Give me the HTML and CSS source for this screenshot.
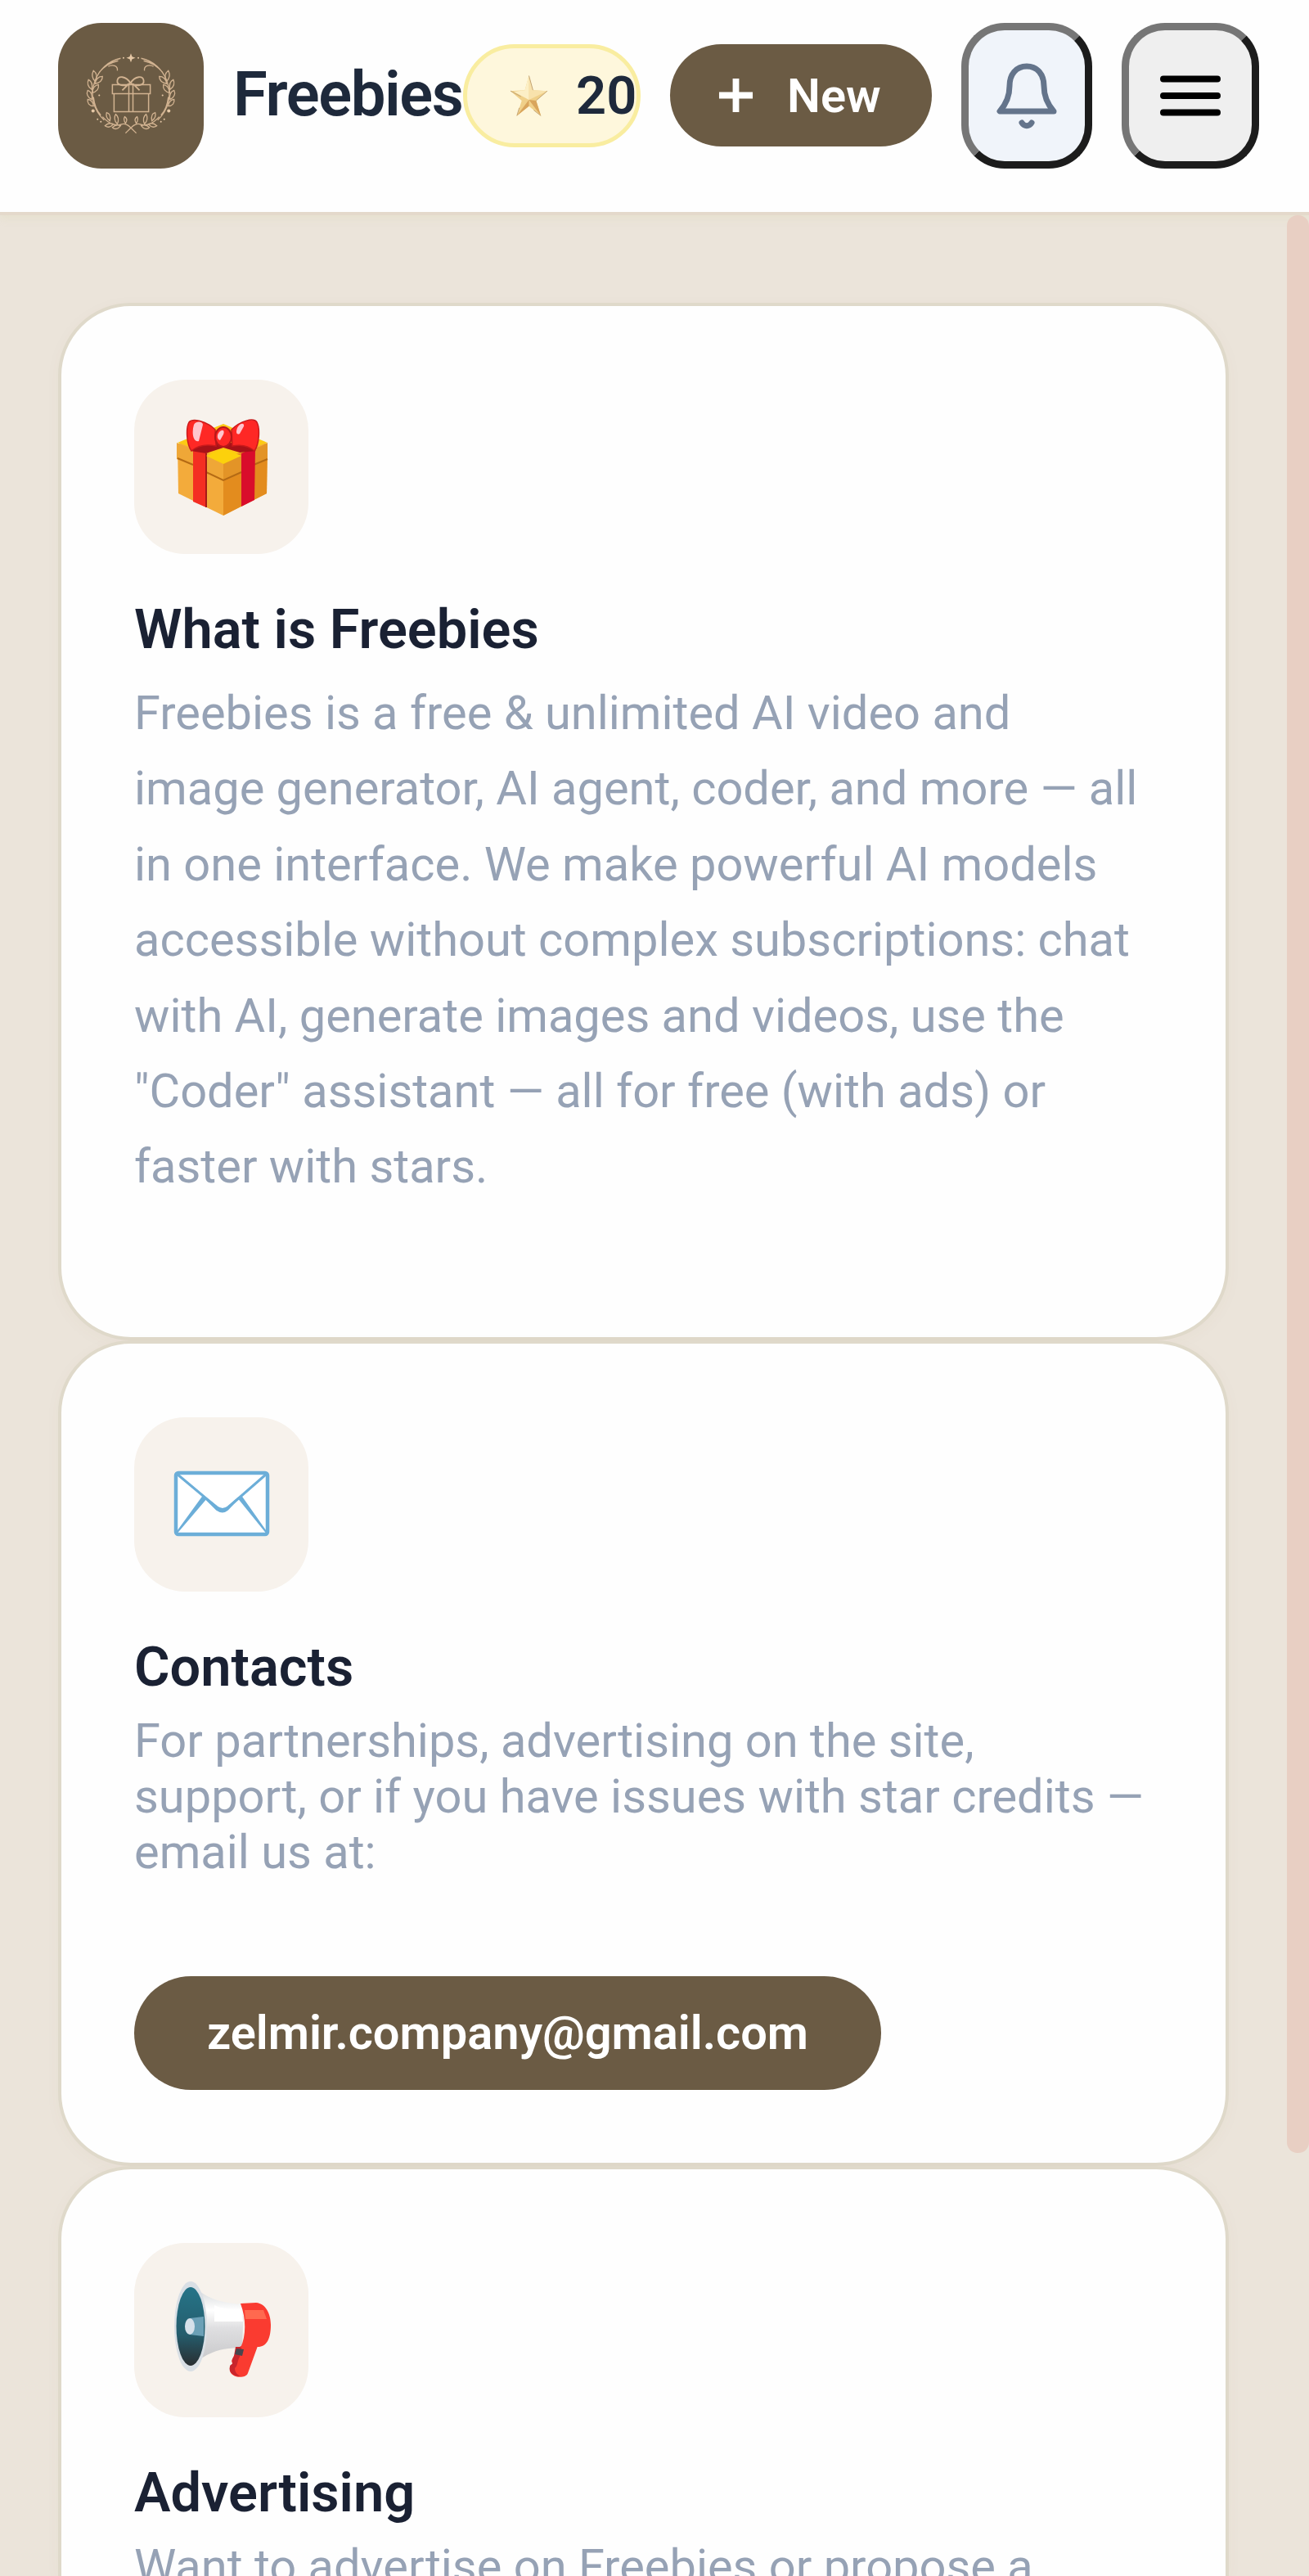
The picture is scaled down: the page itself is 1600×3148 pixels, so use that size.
FILE: index.html
```html
<!DOCTYPE html>
<html lang="en">
<head>
  <meta charset="UTF-8">
  <title>Freebies</title>
  <link rel="stylesheet" href="styles.css">
</head>
<body>
  <header class="topbar">
    <div class="logo">
      <svg viewBox="0 0 177 177">
        <defs>
          <!-- left half of the wreath, mirrored for the right one -->
          <g id="sprig">
            <path d="M76 43c-15 3-26 14-31 27-7 18-2 36 11 48M73 46c-10 2-18 8-23 14M61 53c5-3 12-1 11 5M43 90c1 9 4 17 9 22"/>
            <path d="M45 71c-4-4-4-9-2-13 4 3 5 8 2 13zM45 74c1-6 4-9 9-9 0 5-4 8-9 9zM41 81c-5-3-6-8-4-12 4 2 5 7 4 12zM41 85c1-6 3-9 8-10 1 5-2 9-8 10zM41 93c-5-2-7-7-5-11 4 1 6 6 5 11zM43 101c-5 0-8-4-7-8 4 0 7 4 7 8z"/>
            <path d="M54 114c8 9 17 12 24 9 5-2 10 4 17 11M63 119c-4-3-5-7-4-10 4 1 5 5 4 10zM72 123c-4-4-4-9-2-12 4 3 4 7 2 12zM67 123c-3 4-7 4-10 2 3-3 6-4 10-2zM76 125c-3 4-7 5-10 2 3-3 6-4 10-2zM82 122c-2-3-3-5-1-8 3 2 3 5 1 8z"/>
          </g>
        </defs>
        <g fill="none" stroke="#d2b391" stroke-width="1.3">
          <use href="#sprig"/>
          <use href="#sprig" transform="translate(177 0) scale(-1 1)"/>
          <path d="M66 75h46v11H66zM68 86h42v22H68zM86 75v33M91 75v33" stroke-width="1.5"/>
          <path d="M88 73c-6-9-15-9-16-3s9 8 16 3c6-9 15-9 16-3s-9 8-16 3M86 74l-8 8M91 74l8 8" stroke-width="1.8"/>
        </g>
        <g fill="#e6c8a6">
          <path d="M88.500 37l1.500 4 4 1.500-4 1.500-1.500 4-1.500-4-4-1.500 4-1.500z"/>
          <circle cx="79.500" cy="42.500" r="1"/><circle cx="97.500" cy="42.500" r="1"/>
          <circle cx="42.500" cy="107" r="2"/><circle cx="134.500" cy="107" r="2"/>
          <circle cx="50" cy="88" r="1"/><circle cx="127" cy="88" r="1"/>
          <circle cx="48" cy="117" r="1"/><circle cx="129" cy="117" r="1"/>
          <circle cx="52" cy="120" r="1"/><circle cx="125" cy="120" r="1"/>
        </g>
      </svg>
    </div>
    <div class="brand">Freebies</div>
    <div class="stars">
      <svg class="star" viewBox="0 0 48 52">
        <path d="M24 1l5 18 18 1-14 12 6 19-15-12-15 12 6-19L1 20l18-1z" fill="#f0d089"/>
        <path d="M24 31l9 1 6 19zM24 31v8L9 51z" fill="#d9a55c"/>
        <path d="M24 1v30l5-12zM47 20L24 31l5-12z" fill="#f8e2ac"/>
        <path d="M24 1l-5 18 5 12zM5 21l19 10-5-12z" fill="#fcefc6"/>
        <path d="M24 1l5 18M1 20l13 7M47 20l-14 12M39 51l-9-7M9 51l3-10" stroke="#c2a374" stroke-width="1" fill="none"/>
      </svg>
      <span>20</span>
    </div>
    <button class="new-btn">
      <svg viewBox="0 0 44 44"><path d="M22 1v42M1 22h42" stroke="#fff" stroke-width="8"/></svg>
      <span>New</span>
    </button>
    <button class="icon-btn bell">
      <svg viewBox="0 0 80 90" fill="none" stroke="#64748b" stroke-width="7" stroke-linecap="round" stroke-linejoin="round">
        <path d="M7 64h66c-8-9-12-19-12-31 0-14-8-24-21-24s-21 10-21 24c0 12-4 22-12 31z"/>
        <path d="M34 78c3 5 9 5 12 0"/>
      </svg>
    </button>
    <button class="icon-btn menu">
      <svg viewBox="0 0 74 50" stroke="#000" stroke-width="8" stroke-linecap="round"><path d="M4 4.500h66M4 25h66M4 45.500h66"/></svg>
    </button>
  </header>

  <main>
    <section class="card about">
      <div class="card-icon">
        <svg viewBox="0 0 120 120">
          <path d="M6 32L62 12l54 20-1 60-53 27L7 92z" fill="#f3ab3b"/>
          <path d="M62 49l54-17-1 60-53 27z" fill="#e38c1e"/>
          <path d="M6 30L62 7l54 23-54 19z" fill="#fcc915"/>
          <path d="M5 30l20 9v18L5 50zM41 45l21 9v23l-21-9z" fill="#efa737"/>
          <path d="M62 54l22-9v22l-22 10zM99 39l17-9v20l-17 7z" fill="#e39427"/>
          <path d="M6 49l19 8M41 66l21 10 22-10M99 57l17-7" fill="none" stroke="#b46a14" stroke-width="2"/>
          <path d="M25 35l16 8v66l-16-7z" fill="#f42e22"/>
          <path d="M41 43v66" stroke="#a51a18" stroke-width="2"/>
          <path d="M84 43l17-7-1 64-16 8z" fill="#d90d2b"/>
          <path d="M41 46l21-9 22 9-22 10z" fill="#fcd10c"/>
          <path d="M22 40c18-14 62-14 80 0l-20 2-20-6-21 7z" fill="#a81218"/>
          <path d="M52 14C41 3 24 0 20 5c-4 7-3 27 3 35 8-7 20-8 30-6zM72 14C83 3 99-1 103 5c4 7 3 27-3 35-8-7-17-8-27-6z" fill="#fe2825" stroke="#c91a1b" stroke-width="1.500"/>
          <ellipse cx="62" cy="23" rx="10" ry="12" fill="#fe2825" stroke="#b7181a" stroke-width="2"/>
          <path d="M26 8c3-5 11-4 11 0l-5 20c-7 2-9-10-6-20zM79 12c3-6 9-7 8-2l-5 9c-4 2-5-2-3-7zM57 17c4-4 7-2 5 3l-4 7c-4-1-4-7-1-10z" fill="#ffc5cd"/>
        </svg>
      </div>
      <h2>What is Freebies</h2>
      <p>Freebies is a free &amp; unlimited AI video and<br>image generator, AI agent, coder, and more — all<br>in one interface. We make powerful AI models<br>accessible without complex subscriptions: chat<br>with AI, generate images and videos, use the<br>"Coder" assistant — all for free (with ads) or<br>faster with stars.</p>
    </section>

    <section class="card contacts">
      <div class="card-icon">
        <svg viewBox="0 0 120 120">
          <rect x="4" y="21" width="112" height="75" rx="3" fill="#fff" stroke="#6caed8" stroke-width="4.500"/>
          <path d="M5 22l49 41q7 5 14 0l47-41" fill="none" stroke="#6caed8" stroke-width="3"/>
          <path d="M38 50l17 13q6 4 12 0l14-12-14 15q-6 5-13 0z" fill="#6caed8" stroke="#6caed8" stroke-width="2"/>
          <path d="M37 50L5 94l35-41zM81 52l34 42-31-44z" fill="#6caed8" stroke="#6caed8" stroke-width="2"/>
        </svg>
      </div>
      <h2>Contacts</h2>
      <p>For partnerships, advertising on the site,<br>support, or if you have issues with star credits —<br>email us at:</p>
      <a class="email" href="mailto:zelmir.company@gmail.com">zelmir.company@gmail.com</a>
    </section>

    <section class="card ads">
      <div class="card-icon">
        <svg viewBox="1 1 120 120">
          <defs>
            <linearGradient id="cone" x2="0" y2="1"><stop offset="0" stop-color="#257488"/><stop offset=".6" stop-color="#255d6d"/><stop offset="1" stop-color="#292e31"/></linearGradient>
            <linearGradient id="horn" x2="0" y2="1"><stop offset="0" stop-color="#d5d8da"/><stop offset=".3" stop-color="#fff"/><stop offset=".55" stop-color="#dfdfe1"/><stop offset="1" stop-color="#c9c9cb"/></linearGradient>
          </defs>
          <path d="M30 10c17 14 35 18 58 19l-2 53c-20 0-36 3-53 15z" fill="url(#horn)"/>
          <path d="M52 30c10 5 22 5 33 5l2 15H52z" fill="#fff"/>
          <ellipse cx="23" cy="56" rx="20" ry="55" fill="#d9dfe5"/>
          <ellipse cx="23" cy="56" rx="17.500" ry="48" fill="url(#cone)"/>
          <path d="M22 46l17-2v24l-17-2z" fill="#6ba0b6"/>
          <ellipse cx="22" cy="56" rx="6" ry="10" fill="#d7e1ea"/>
          <path d="M84 80h21l-12 33c-3 8-23 6-22-5 0-5 3-4 3-7-2-4 1-6 2-9z" fill="#fa3b30"/>
          <path d="M78 81h8c-4 7-1 10-4 14-2 5-2 10-5 12 0 5 3 8 7 10-10 0-15-6-13-12 0-3 4-2 3-5-1-4 1-5 2-8z" fill="#c9252c"/>
          <path d="M84 28l19-1c12 1 18 14 18 27 0 17-5 27-16 27l-21 1c7-15 7-35 0-54z" fill="#fa3b30"/>
          <path d="M89 36h23l4 11H90z" fill="#ff694f"/>
          <path d="M79 83l9 1-2 8-9-2z" fill="#47464e"/>
        </svg>
      </div>
      <h2>Advertising</h2>
      <p>Want to advertise on Freebies or propose a</p>
    </section>
  </main>
  <div class="scroll-thumb"></div>
</body>
</html>
```
FILE: styles.css
```css
* {
  box-sizing: border-box;
}

body {
  margin: 0;
  height: 3148px;
  overflow: hidden;
  background: #ebe4da;
  font-family: Roboto, "Liberation Sans", sans-serif;
  color: #1a2133;
}

svg {
  display: block;
}

.topbar {
  display: flex;
  align-items: center;
  height: 263px;
  padding: 0 61px 26px 71px;
  background: #fefefe;
  border-bottom: 4px solid #e4d9cb;
  box-shadow: 0 4px 9px rgba(225, 222, 190, 0.45);
}

.logo {
  width: 178px;
  height: 178px;
  border-radius: 53px;
  background: #6b5b44;
}

.brand {
  margin-left: 36px;
  width: 281px;
  padding-bottom: 3px;
  font-size: 76px;
  font-weight: 600;
  letter-spacing: -1.400px;
  color: #1e293b;
}

.stars {
  display: flex;
  align-items: center;
  width: 217px;
  height: 126px;
  padding-left: 52px;
  border: 5px solid #f9eda0;
  border-radius: 63px;
  background: #fef7dc;
  font-size: 65px;
  font-weight: 600;
  color: #1e293b;
}

.star {
  flex: none;
  width: 47px;
  height: 52px;
  margin-right: 34px;
}

.new-btn {
  display: flex;
  align-items: center;
  gap: 41px;
  width: 320px;
  height: 125px;
  margin-left: 36px;
  padding: 0 0 0 59px;
  border: 0;
  border-radius: 63px;
  background: #6b5b44;
  color: #fff;
  font: 600 57.800px Roboto, sans-serif;
}

.new-btn svg {
  width: 43px;
  height: 43px;
}

.icon-btn {
  display: flex;
  align-items: center;
  justify-content: center;
  height: 178px;
  margin-left: 36px;
  padding: 0;
  border: 9px solid;
  border-color: #767676 #1c1c1c #1c1c1c #767676;
  border-radius: 53px;
}

.bell {
  width: 160px;
  background: #f0f4fa;
}

.bell svg {
  width: 80px;
  height: 90px;
}

.menu {
  width: 168px;
  background: #efefef;
}

.menu svg {
  width: 74px;
  height: 50px;
}

main {
  padding: 107px 98px 0 71px;
}

.card {
  height: 1009px;
  padding: 90px;
  border: 4px solid #dfd9ca;
  border-radius: 89px;
  background: #fefefe;
  box-shadow: 0 4px 20px rgba(120, 100, 60, 0.03);
}

.about {
  height: 1268px;
}

/* runs off the bottom of the screen */
.ads {
  height: 501px;
  padding-bottom: 0;
  border-bottom: 0;
  border-radius: 89px 89px 0 0;
}

.card-icon {
  display: flex;
  align-items: center;
  justify-content: center;
  width: 213px;
  height: 213px;
  margin-left: -1px;
  border-radius: 62px;
  background: #f7f2ec;
}

.card-icon svg {
  width: 120px;
  height: 120px;
}

h2 {
  margin: 52px 0 16px -1px;
  font-size: 66.700px;
  font-weight: 600;
  line-height: 80px;
}

p {
  margin: 0 0 0 -1px;
  font-size: 57.800px;
  line-height: 68px;
  white-space: nowrap;
  color: #96a2b5;
}

.about p {
  line-height: 92.400px;
}

.email {
  display: inline-block;
  height: 139px;
  margin: 118px 0 0 -1px;
  padding: 0 89px;
  border-radius: 70px;
  background: #6b5b44;
  color: #fff;
  font-size: 57.800px;
  font-weight: 600;
  line-height: 139px;
  letter-spacing: -0.050px;
  text-decoration: none;
}

.scroll-thumb {
  position: absolute;
  top: 263px;
  right: 0;
  width: 27px;
  height: 2368px;
  border-radius: 13px;
  background: #e8cfc3;
}
```
